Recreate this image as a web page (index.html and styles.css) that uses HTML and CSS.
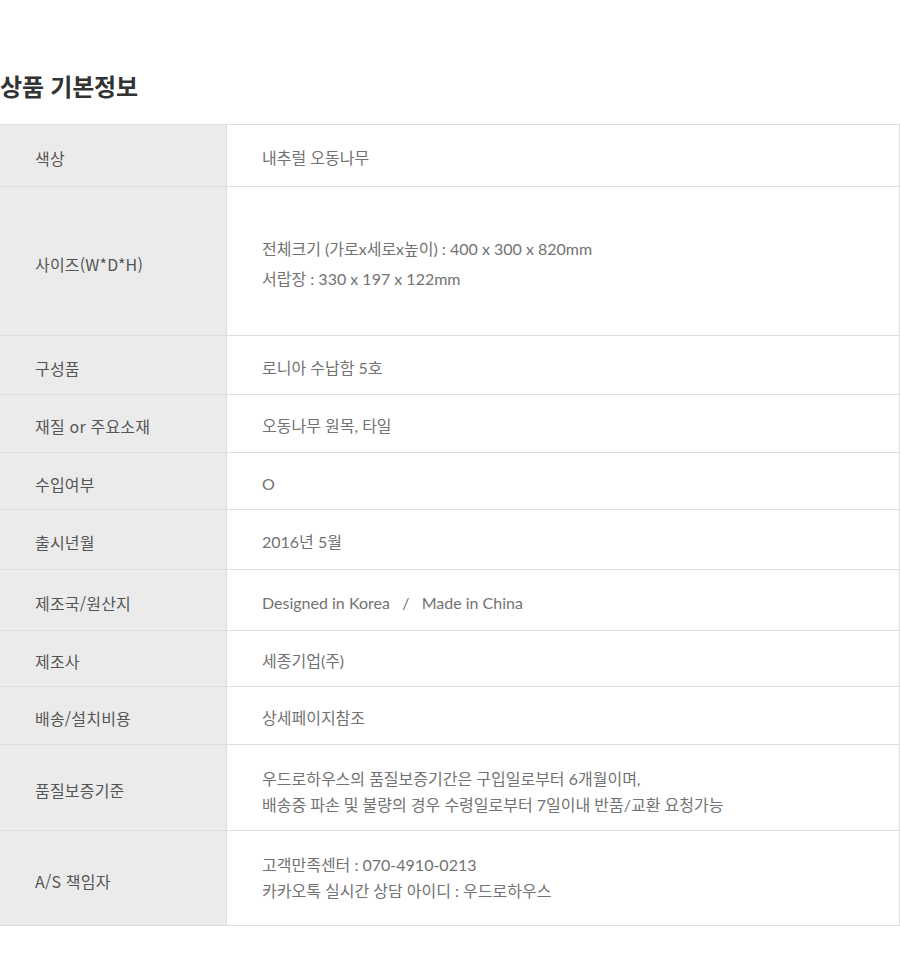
FILE: index.html
```html
<!DOCTYPE html>
<html lang="ko">
<head>
<meta charset="utf-8">
<title>상품 기본정보</title>
<link rel="stylesheet" href="styles.css">
</head>
<body>
<h2 class="title">상품 기본정보</h2>
<div class="info">
  <div class="row r1"><div class="th">색상</div><div class="td">내추럴 오동나무</div></div>
  <div class="row r2"><div class="th">사이즈(W*D*H)</div><div class="td lh30">전체크기 (가로x세로x높이) : 400 x 300 x 820mm<br>서랍장 : 330 x 197 x 122mm</div></div>
  <div class="row r3"><div class="th">구성품</div><div class="td">로니아 수납함 5호</div></div>
  <div class="row r4"><div class="th">재질 or 주요소재</div><div class="td">오동나무 원목, 타일</div></div>
  <div class="row r5"><div class="th">수입여부</div><div class="td">O</div></div>
  <div class="row r6"><div class="th">출시년월</div><div class="td">2016년 5월</div></div>
  <div class="row r7"><div class="th">제조국/원산지</div><div class="td">Designed in Korea &nbsp; / &nbsp; Made in China</div></div>
  <div class="row r8"><div class="th">제조사</div><div class="td">세종기업(주)</div></div>
  <div class="row r9"><div class="th">배송/설치비용</div><div class="td">상세페이지참조</div></div>
  <div class="row r10"><div class="th">품질보증기준</div><div class="td lh26 pt6">우드로하우스의 품질보증기간은 구입일로부터 6개월이며,<br>배송중 파손 및 불량의 경우 수령일로부터 7일이내 반품/교환 요청가능</div></div>
  <div class="row r11"><div class="th">A/S 책임자</div><div class="td lh26 pt0">고객만족센터 : 070-4910-0213<br>카카오톡 실시간 상담 아이디 : 우드로하우스</div></div>
</div>
</body>
</html>
```
FILE: styles.css
```css
html, body {
  margin: 0;
  padding: 0;
  background: #fff;
}
body {
  font-family: "Noto Sans CJK KR", "Noto Sans", sans-serif;
  width: 900px;
}
.title {
  margin: 68px 0 20px 0;
  font-size: 24px;
  line-height: 36px;
  font-weight: 700;
  color: #333;
  letter-spacing: -0.2px;
}
.info {
  width: 900px;
  box-sizing: border-box;
  border-top: 1px solid #dedede;
  border-right: 1px solid #dedede;
}
.row {
  display: flex;
  box-sizing: border-box;
  border-bottom: 1px solid #dedede;
}
.th {
  width: 227px;
  flex: none;
  box-sizing: border-box;
  background: #ebebeb;
  border-right: 1px solid #dedede;
  padding: 5px 0 0 35px;
  display: flex;
  align-items: center;
  font-size: 16px;
  color: #555;
  letter-spacing: 0.2px;
}
.td {
  flex: 1;
  padding: 5px 0 0 35px;
  display: flex;
  flex-direction: column;
  justify-content: center;
  font-family: Lato, "Noto Sans CJK KR", sans-serif;
  font-size: 16px;
  line-height: 22px;
  color: #727272;
  letter-spacing: 0;
}
.lh30 { line-height: 30px; }
.lh26 { line-height: 26px; }
.pt6 { padding-top: 8px; }
.pt0 { padding-top: 0; }
.r1 { height: 62px; }
.r2 { height: 149px; }
.r3 { height: 59px; }
.r4 { height: 58px; }
.r5 { height: 57px; }
.r6 { height: 60px; }
.r7 { height: 61px; }
.r8 { height: 56px; }
.r9 { height: 58px; }
.r10 { height: 86px; }
.r11 { height: 95px; }
```
